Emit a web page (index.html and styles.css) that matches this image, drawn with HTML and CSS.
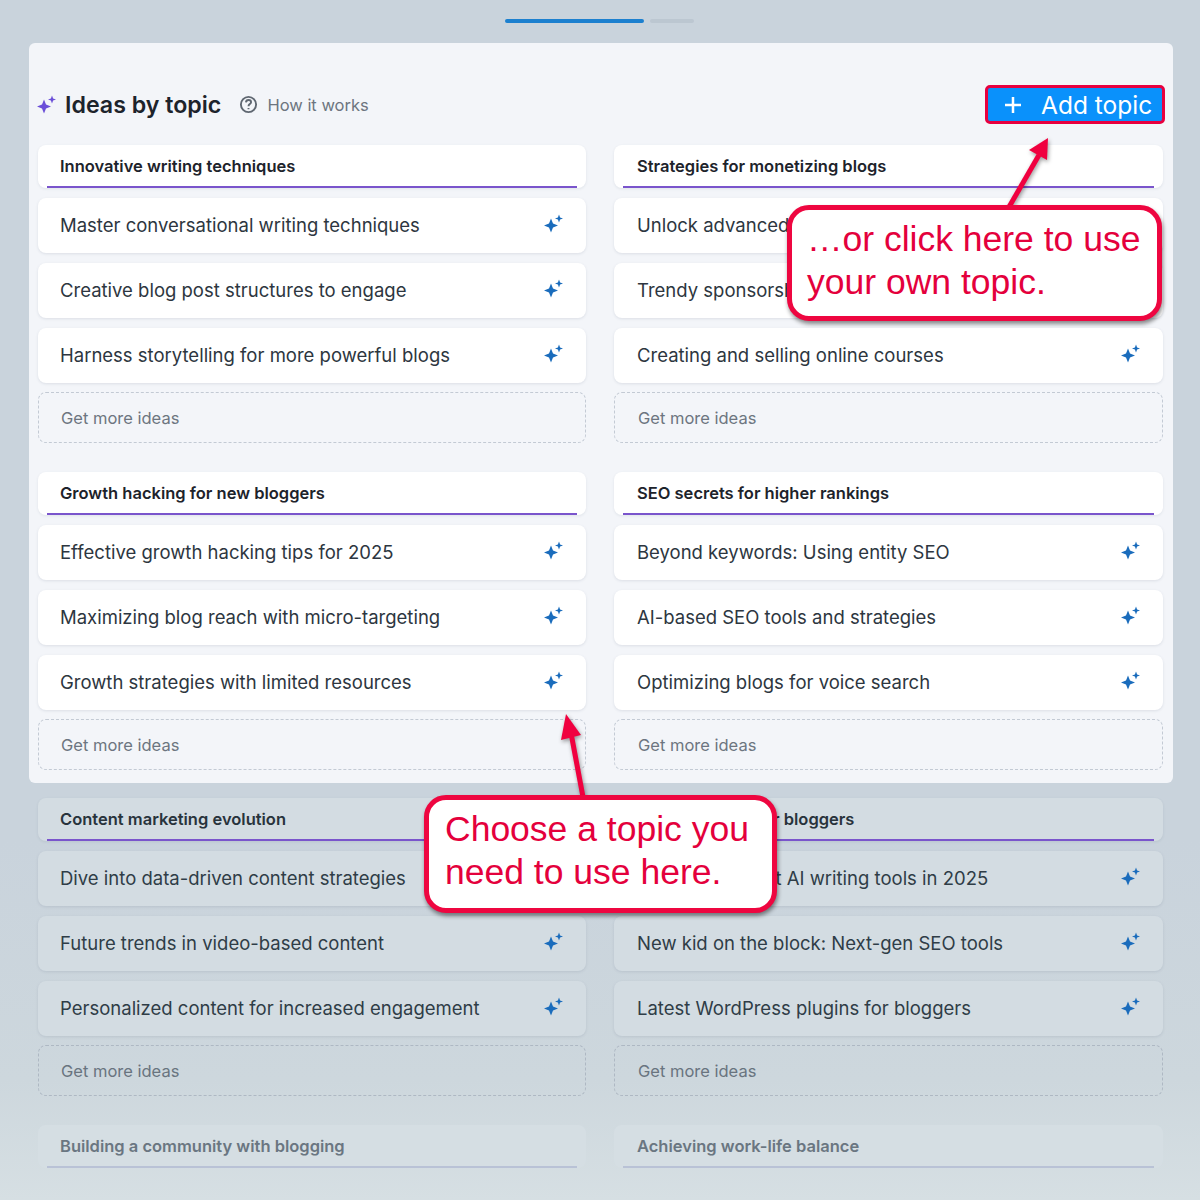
FILE: index.html
```html
<!DOCTYPE html>
<html lang="en">
<head>
    <meta charset="UTF-8">
    <meta name="viewport" content="width=device-width, initial-scale=1.0">
    <title>Ideas by topic</title>
    <link rel="stylesheet" href="styles.css">
</head>
<body>
    <svg class="icon-defs" width="0" height="0">
        <symbol id="spark" viewBox="0 0 20 20">
            <path d="M7 4.500 L9 9.500 L14 11.500 L9 13.500 L7 18.500 L5 13.500 L0 11.500 L5 9.500Z"/>
            <path d="M15 0.500 L16.100 3.400 L19 4.500 L16.100 5.600 L15 8.500 L13.900 5.600 L11 4.500 L13.900 3.400Z"/>
        </symbol>
    </svg>

    <div class="progress">
        <span class="progress-done"></span>
        <span class="progress-rest"></span>
    </div>

    <!-- Highlighted panel -->
    <div class="panel">
        <div class="panel-head">
            <svg class="head-spark"><use href="#spark"/></svg>
            <h1>Ideas by topic</h1>
            <a class="how-link" href="#">
                <svg class="help-icon" viewBox="0 0 20 20">
                    <circle cx="10" cy="10" r="8"/>
                    <path d="M7.300 7.800 C7.400 6 8.600 5.200 10 5.200 C11.600 5.200 12.700 6.200 12.700 7.600 C12.700 9.600 10 9.600 10 11.800"/>
                    <path d="M10 13.700 V15"/>
                </svg>
                How it works
            </a>
            <button class="add-btn">
                <svg class="add-plus" viewBox="0 0 18 18"><path d="M9 1 V17 M1 9 H17"/></svg>
                Add topic
            </button>
        </div>

        <div class="topic-grid">
            <div class="topic">
                <div class="topic-title"><h3>Innovative writing techniques</h3></div>
                <div class="idea">Master conversational writing techniques<svg><use href="#spark"/></svg></div>
                <div class="idea">Creative blog post structures to engage<svg><use href="#spark"/></svg></div>
                <div class="idea">Harness storytelling for more powerful blogs<svg><use href="#spark"/></svg></div>
                <div class="more">Get more ideas</div>
            </div>
            <div class="topic">
                <div class="topic-title"><h3>Strategies for monetizing blogs</h3></div>
                <div class="idea">Unlock advanced affiliate tactics<svg><use href="#spark"/></svg></div>
                <div class="idea">Trendy sponsorship ideas<svg><use href="#spark"/></svg></div>
                <div class="idea">Creating and selling online courses<svg><use href="#spark"/></svg></div>
                <div class="more">Get more ideas</div>
            </div>
            <div class="topic">
                <div class="topic-title"><h3>Growth hacking for new bloggers</h3></div>
                <div class="idea">Effective growth hacking tips for 2025<svg><use href="#spark"/></svg></div>
                <div class="idea">Maximizing blog reach with micro-targeting<svg><use href="#spark"/></svg></div>
                <div class="idea">Growth strategies with limited resources<svg><use href="#spark"/></svg></div>
                <div class="more">Get more ideas</div>
            </div>
            <div class="topic">
                <div class="topic-title"><h3>SEO secrets for higher rankings</h3></div>
                <div class="idea">Beyond keywords: Using entity SEO<svg><use href="#spark"/></svg></div>
                <div class="idea">AI-based SEO tools and strategies<svg><use href="#spark"/></svg></div>
                <div class="idea">Optimizing blogs for voice search<svg><use href="#spark"/></svg></div>
                <div class="more">Get more ideas</div>
            </div>
        </div>
    </div>

    <!-- Dimmed rows below the panel -->
    <div class="topic-grid dimmed">
        <div class="topic">
            <div class="topic-title"><h3>Content marketing evolution</h3></div>
            <div class="idea">Dive into data-driven content strategies<svg><use href="#spark"/></svg></div>
            <div class="idea">Future trends in video-based content<svg><use href="#spark"/></svg></div>
            <div class="idea">Personalized content for increased engagement<svg><use href="#spark"/></svg></div>
            <div class="more">Get more ideas</div>
        </div>
        <div class="topic">
            <div class="topic-title"><h3>Useful AI tools for bloggers</h3></div>
            <div class="idea">Tested the latest AI writing tools in 2025<svg><use href="#spark"/></svg></div>
            <div class="idea">New kid on the block: Next-gen SEO tools<svg><use href="#spark"/></svg></div>
            <div class="idea">Latest WordPress plugins for bloggers<svg><use href="#spark"/></svg></div>
            <div class="more">Get more ideas</div>
        </div>
        <div class="topic faded">
            <div class="topic-title"><h3>Building a community with blogging</h3></div>
        </div>
        <div class="topic faded">
            <div class="topic-title"><h3>Achieving work-life balance</h3></div>
        </div>
    </div>

    <!-- Annotations drawn over the page -->
    <svg class="arrows" width="1200" height="1200" viewBox="0 0 1200 1200">
        <path class="arrow-line" d="M1009 207 L1039 155"/>
        <path class="arrow-head" d="M1048 138 L1047 160 L1029 150Z"/>
        <path class="arrow-line" d="M583 797 L571 733"/>
        <path class="arrow-head" d="M566 714 L581 735 L561 740Z"/>
    </svg>
    <div class="callout callout-own">…or click here to use<br>your own topic.</div>
    <div class="callout callout-choose">Choose a topic you<br>need to use here.</div>
</body>
</html>
```

FILE: styles.css
```css
* {
    margin: 0;
    padding: 0;
    box-sizing: border-box;
    font-family: 'Inter', sans-serif;
}

html, body {
    height: 1200px;
    overflow: hidden;
}

body {
    position: relative;
    background: linear-gradient(#c9d3dc 0%, #c9d3dc 70%, #cdd7dd 90%, #d6dfe3 100%);
    color: #2d3640;
    padding: 19px 37px 0 38px;
}

.icon-defs {
    position: absolute;
}

.progress {
    display: flex;
    gap: 6px;
    justify-content: center;
    height: 4px;
    margin-bottom: 20px;
    padding-right: 2px;
}

.progress-done {
    width: 139px;
    background: #1c80cf;
    border-radius: 2px;
}

.progress-rest {
    width: 44px;
    background: #bcc7d1;
    border-radius: 2px;
}

.panel {
    background: #f3f5f9;
    border-radius: 6px;
    margin: 0 -10px 15px -9px;
    padding: 42px 10px 13px 9px;
}

.panel-head {
    display: flex;
    align-items: center;
    height: 39px;
    margin-bottom: 21px;
}

.head-spark {
    width: 20px;
    height: 20px;
    fill: #6b4fd8;
    margin-left: -1px;
    margin-right: 8px;
}

h1 {
    font-size: 23.200px;
    font-weight: 600;
    color: #1d232b;
    margin-right: 18px;
}

.how-link {
    display: flex;
    align-items: center;
    gap: 9px;
    font-size: 16.500px;
    color: #6d7580;
    text-decoration: none;
}

.help-icon {
    width: 19px;
    height: 19px;
    fill: none;
    stroke: #5f6771;
    stroke-width: 2;
}

.add-btn {
    display: flex;
    align-items: center;
    width: 180px;
    height: 39px;
    margin-left: auto;
    margin-right: -2px;
    padding-left: 16px;
    background: #0a91fb;
    border: 3px solid #e8003f;
    border-radius: 5px;
    color: #fff;
    font-size: 24.500px;
}

.add-plus {
    width: 18px;
    height: 18px;
    margin-right: 19px;
    fill: none;
    stroke: #fff;
    stroke-width: 2.500;
}

.topic-grid {
    display: grid;
    grid-template-columns: 548px 549px;
    column-gap: 28px;
    row-gap: 29px;
}

.topic {
    display: flex;
    flex-direction: column;
    gap: 10px;
}

.topic-title {
    height: 43px;
    padding: 0 9px;
    background: #fff;
    border-radius: 8px;
    box-shadow: 0 1px 3px rgba(60, 80, 100, 0.1);
}

.topic-title h3 {
    height: 43px;
    padding: 11px 0 0 13px;
    border-bottom: 2px solid #7a55cc;
    font-size: 16.500px;
    font-weight: 600;
    color: #1d232b;
}

.idea {
    display: flex;
    align-items: center;
    justify-content: space-between;
    height: 55px;
    padding: 0 22px 2px;
    background: #fff;
    border-radius: 8px;
    box-shadow: 0 1px 3px rgba(60, 80, 100, 0.13);
    font-size: 18.500px;
    color: #2d3640;
}

.idea svg {
    width: 20px;
    height: 20px;
    margin-top: -2px;
    fill: #1a6cbc;
    flex-shrink: 0;
}

.topic:nth-child(even) .idea {
    padding-left: 23px;
}

.topic:nth-child(even) h3 {
    padding-left: 14px;
}

.more {
    height: 51px;
    margin-top: -1px;
    padding: 14.500px 22px;
    border: 1px dashed #c3cad4;
    border-radius: 8px;
    font-size: 16.500px;
    color: #6d7580;
}

.topic:nth-child(even) .more {
    padding-left: 23px;
}

/* rows outside the highlighted panel */
.dimmed .topic-title,
.dimmed .idea {
    background: #d3dce2;
}

.dimmed .topic-title h3 {
    color: #28333c;
}

.dimmed .idea {
    color: #2f3d47;
}

.dimmed .more {
    border-color: #aeb8c3;
    color: #69747f;
}

.dimmed .faded .topic-title {
    background: #d5dee3;
    box-shadow: none;
}

.dimmed .faded h3 {
    color: #6a7681;
    border-bottom-color: #b9c2d6;
}

/* annotations */
.arrows {
    position: absolute;
    top: 0;
    left: 0;
    filter: drop-shadow(1px 2px 2px rgba(0, 0, 0, 0.4));
}

.arrow-line {
    stroke: #f0003f;
    stroke-width: 5;
    fill: none;
}

.arrow-head {
    fill: #f0003f;
}

.callout {
    position: absolute;
    padding: 8px 15px;
    background: #fff;
    border: 5px solid #ee0640;
    border-radius: 22px;
    box-shadow: 1px 3px 4px rgba(0, 0, 0, 0.45);
    font-family: 'Liberation Sans', Arial, sans-serif;
    font-size: 35.500px;
    line-height: 43px;
    color: #e4003c;
    white-space: nowrap;
}

.callout-own {
    top: 205px;
    left: 787px;
    width: 375px;
    height: 116px;
}

.callout-choose {
    top: 795px;
    left: 424px;
    width: 353px;
    height: 118px;
    padding-left: 16px;
}
```
